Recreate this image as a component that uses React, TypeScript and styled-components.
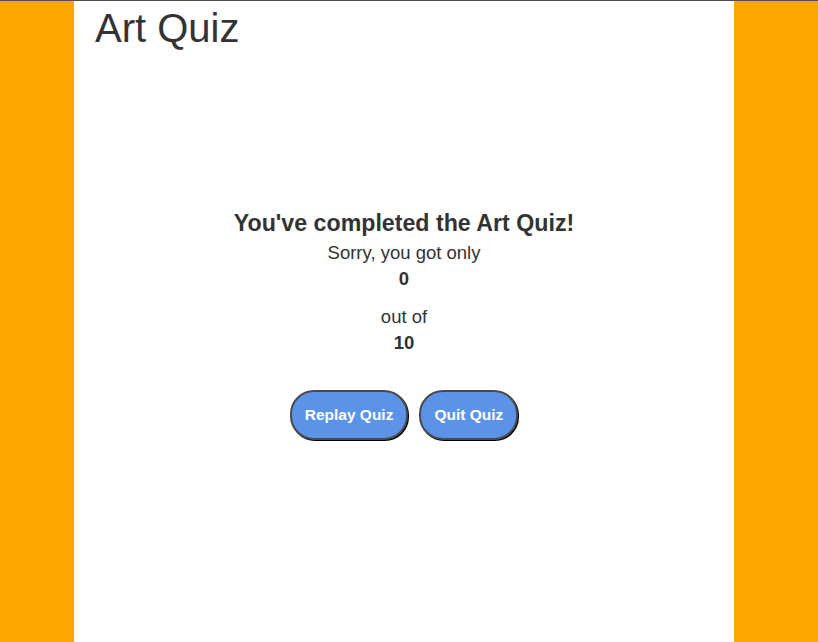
import styled, { createGlobalStyle } from "styled-components";

const GlobalStyle = createGlobalStyle`
  html, body {
    margin: 0;
    padding: 0;
    height: 100%;
  }
  body {
    background: #ffa500;
    border-top: 1px solid #4f4f4f;
    box-sizing: border-box;
    font-family: "Liberation Sans", Arial, sans-serif;
    color: #333333;
  }
  #root {
    height: 100%;
  }
`;

const Page = styled.div`
  margin-left: 74px;
  width: 660px;
  min-height: 100%;
  background: #ffffff;
  display: flex;
  flex-direction: column;
`;

const Title = styled.h1`
  margin: 0;
  padding: 4px 0 0 21px;
  font-size: 40px;
  font-weight: 400;
  line-height: 46px;
`;

const Result = styled.div`
  margin-top: 159px;
  display: flex;
  flex-direction: column;
  align-items: center;
  text-align: center;
`;

const Heading = styled.h2`
  margin: 0 0 4px;
  font-size: 23.2px;
  font-weight: 700;
  line-height: 26px;
`;

const Line = styled.div<{ $bold?: boolean; $gap?: number }>`
  font-size: 18.5px;
  line-height: 26px;
  font-weight: ${(p) => (p.$bold ? 700 : 400)};
  margin-top: ${(p) => p.$gap ?? 0}px;
`;

const Buttons = styled.div`
  display: flex;
  gap: 11px;
  margin-top: 34px;
`;

const Button = styled.button`
  height: 50px;
  padding: 0 13px;
  border-radius: 24px;
  border: 2px solid #4a4a4a;
  box-shadow: 1px 1px 0 #000;
  background: #5b93e8;
  color: #ffffff;
  font-family: "Liberation Sans", Arial, sans-serif;
  font-size: 15.5px;
  font-weight: 700;
  cursor: pointer;
`;

export default function App() {
  return (
    <>
      <GlobalStyle />
      <Page>
        <Title>Art Quiz</Title>
        <Result>
          <Heading>You've completed the Art Quiz!</Heading>
          <Line>Sorry, you got only</Line>
          <Line $bold>0</Line>
          <Line $gap={12}>out of</Line>
          <Line $bold>10</Line>
          <Buttons>
            <Button>Replay Quiz</Button>
            <Button>Quit Quiz</Button>
          </Buttons>
        </Result>
      </Page>
    </>
  );
}
